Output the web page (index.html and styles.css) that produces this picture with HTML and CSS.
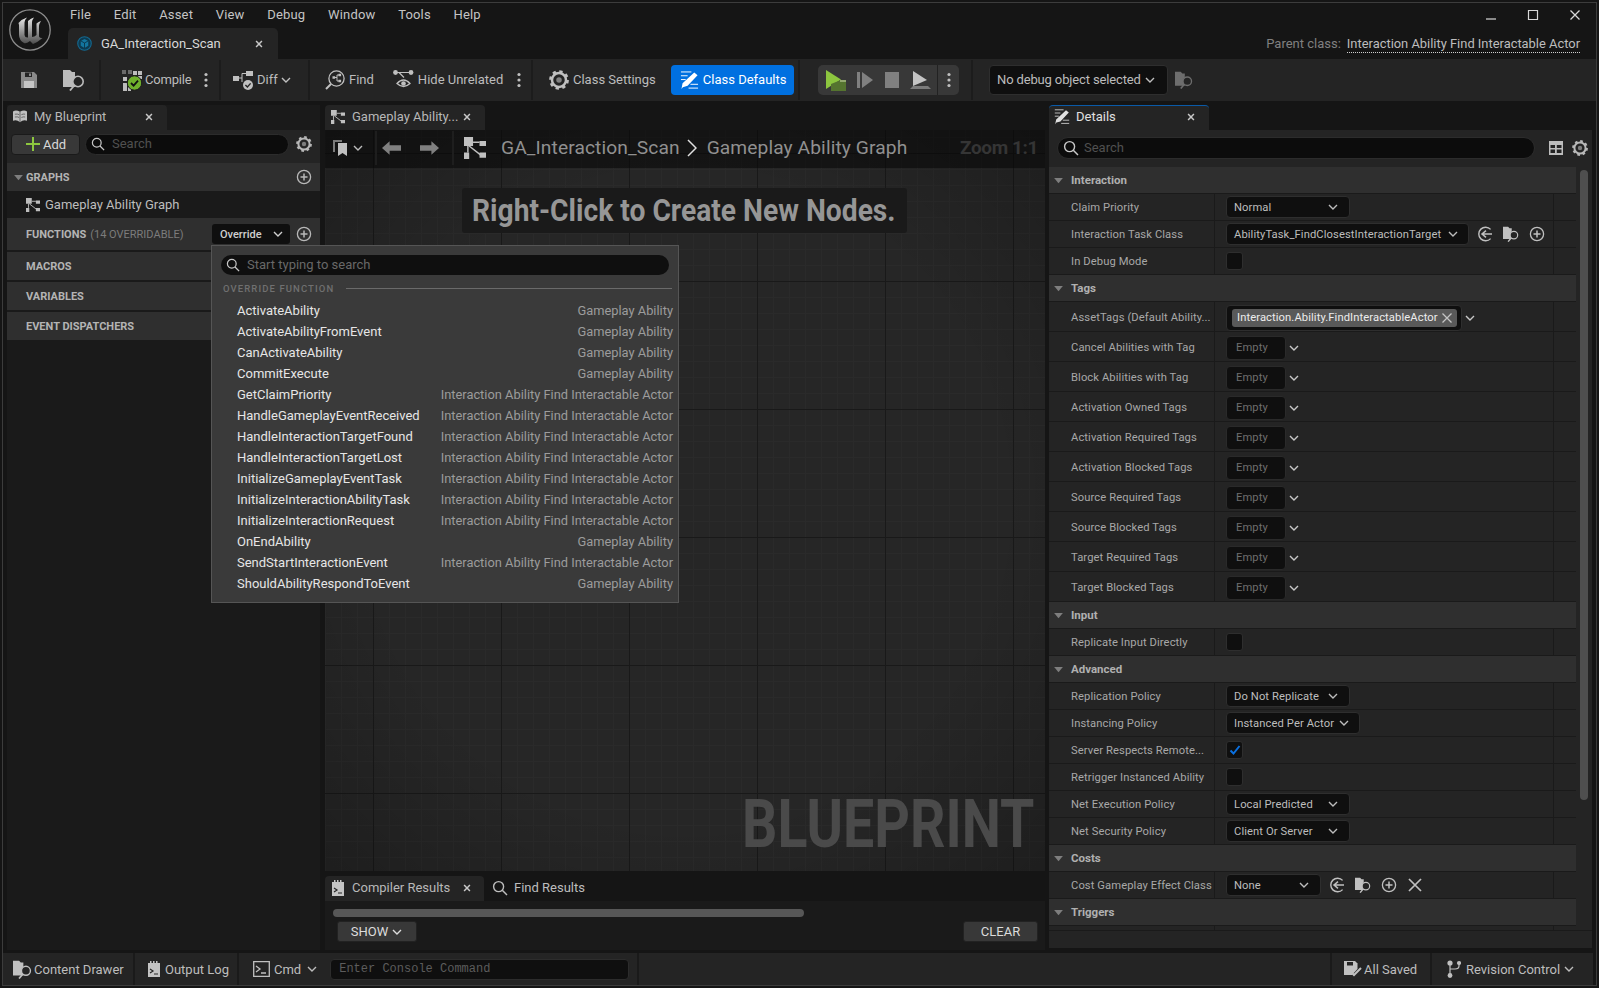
FILE: index.html
```html
<!DOCTYPE html>
<html lang="en">
<head>
<meta charset="utf-8">
<title>GA_Interaction_Scan</title>
<link rel="stylesheet" href="styles.css">
</head>
<body>
<svg class="sprite" xmlns="http://www.w3.org/2000/svg">
  <defs>
    <linearGradient id="ue-grad" x1="0" y1="0" x2="0" y2="1"><stop offset="0" stop-color="#e8e8e8"/><stop offset=".5" stop-color="#9a9a9a"/><stop offset="1" stop-color="#4c4c4c"/></linearGradient>
    <symbol id="i-x" viewBox="0 0 12 12"><path d="M2.5 2.5l7 7M9.5 2.5l-7 7" fill="none" stroke="currentColor" stroke-width="1.8"/></symbol>
    <symbol id="i-xthin" viewBox="0 0 12 12"><path d="M1.500 1.500l9 9M10.500 1.500l-9 9" fill="none" stroke="currentColor" stroke-width="1.300"/></symbol>
    <symbol id="i-chev" viewBox="0 0 12 12"><path d="M2 4l4 4 4-4" fill="none" stroke="currentColor" stroke-width="1.4"/></symbol>
    <symbol id="i-tri" viewBox="0 0 12 8"><path d="M1 1h10L6 7z" fill="currentColor"/></symbol>
    <symbol id="i-search" viewBox="0 0 16 16"><circle cx="6.6" cy="6.6" r="5" fill="none" stroke="currentColor" stroke-width="1.4"/><path d="M10.3 10.3L15 15" stroke="currentColor" stroke-width="1.5"/></symbol>
    <symbol id="i-plus-c" viewBox="0 0 16 16"><circle cx="8" cy="8" r="6.6" fill="none" stroke="currentColor" stroke-width="1.3"/><path d="M8 4.5v7M4.5 8h7" stroke="currentColor" stroke-width="1.5"/></symbol>
    <symbol id="i-back" viewBox="0 0 16 16"><path d="M13.6 3.4A6.8 6.8 0 1 0 13.6 12.6" fill="none" stroke="currentColor" stroke-width="1.4"/><path d="M15 8H6M9 4.6L5 8l4 3.4" fill="none" stroke="currentColor" stroke-width="1.5"/></symbol>
    <symbol id="i-gear" viewBox="0 0 16 16"><circle cx="8" cy="8" r="5.6" fill="none" stroke="currentColor" stroke-width="2"/><circle cx="8" cy="8" r="6.8" fill="none" stroke="currentColor" stroke-width="2.2" stroke-dasharray="2.6 2.74"/><circle cx="8" cy="8" r="2.2" fill="currentColor" opacity=".6"/></symbol>
    <symbol id="i-save" viewBox="0 0 18 18"><path d="M1 1h13l3 3v13H1z" fill="currentColor"/><path d="M5 1.5h7v4.5H5z" fill="#242424"/><path d="M9 2.5h2v2.5H9z" fill="currentColor"/><path d="M4 10h10v7H4z" fill="#c6c6c6"/></symbol>
    <symbol id="i-browse" viewBox="0 0 22 22"><path d="M0 1h7l2 2h3v15H0z" fill="currentColor"/><circle cx="15" cy="12.500" r="5.200" fill="#242424" stroke="currentColor" stroke-width="1.600"/><path d="M11.200 16.500L7 21.500" stroke="currentColor" stroke-width="1.900"/></symbol>
    <symbol id="i-compile" viewBox="0 0 21 21"><g fill="#6a6a6a"><path d="M0 0h4v4H0zM6 0h4v4H6z"/></g><g fill="#bdbdbd"><path d="M16 1h4v4h-4zM1 7h4v4H1zM11 1h4v4h-4zM1 13h4v4H1zM1 17h4v4H1zM6 17h3v4H6zM16 6h4v3h-4z"/></g><circle cx="12.5" cy="13" r="7.2" fill="#6fb02c" stroke="#1c1c1c"/><path d="M9 13l2.6 2.6L16 10.6" fill="none" stroke="#111" stroke-width="1.8"/></symbol>
    <symbol id="i-kebab" viewBox="0 0 4 16"><circle cx="2" cy="2.5" r="1.6" fill="currentColor"/><circle cx="2" cy="8" r="1.6" fill="currentColor"/><circle cx="2" cy="13.5" r="1.6" fill="currentColor"/></symbol>
    <symbol id="i-diff" viewBox="0 0 20 20"><path d="M0 6h6v5H0zM13 1h7v5h-7z" fill="currentColor"/><path d="M6 8h3V3.5h4M9 8v4" fill="none" stroke="currentColor" stroke-width="1"/><circle cx="15" cy="15" r="5" fill="currentColor"/><path d="M12.4 15l2 2 3.2-3.6" fill="none" stroke="#242424" stroke-width="1.4"/></symbol>
    <symbol id="i-find" viewBox="0 0 20 20"><circle cx="11.5" cy="8.5" r="7.6" fill="none" stroke="currentColor" stroke-width="1.3"/><path d="M6 14L1 19" stroke="currentColor" stroke-width="2"/><path d="M9 7.5h3V5h3M12 7.5V11h3" fill="none" stroke="currentColor"/><path d="M7.5 6.2h2.6v2.6H7.5zM13.5 3.8h2.6v2.4h-2.6zM13.5 9.8h2.6v2.4h-2.6z" fill="currentColor"/></symbol>
    <symbol id="i-hide" viewBox="0 0 21 20"><circle cx="2.5" cy="2.5" r="2.4" fill="currentColor"/><circle cx="18" cy="2.5" r="2.4" fill="currentColor"/><path d="M3 2.5h14M6 2.5l5 5" fill="none" stroke="currentColor" stroke-width="1.2"/><path d="M4 13.5q6.500-7 13 0q-6.500 6-13 0z" fill="none" stroke="currentColor" stroke-width="1.3"/><circle cx="10.500" cy="13.500" r="2.300" fill="currentColor"/></symbol>
    <symbol id="i-pencil" viewBox="0 0 20 20"><path d="M1 1h11M1 5h7M1 9h5M9 18h10M11 14h8" stroke="currentColor" stroke-width="1" fill="none"/><path d="M15 1.500l3.500 3L8 15.500l-5 1.500-1.500 2 1.200-6z" fill="currentColor"/></symbol>
    <symbol id="i-play" viewBox="0 0 20 21"><path d="M0 0l15 9.500L0 19z" fill="#8dc63f"/><path d="M5 14l10-4h5v11H5z" fill="#55742f"/><path d="M14 10h6v2h-6z" fill="#93a86f"/></symbol>
    <symbol id="i-skip" viewBox="0 0 16 16"><path d="M0 0h3v16H0zM5 0l11 8-11 8z" fill="currentColor"/></symbol>
    <symbol id="i-stop" viewBox="0 0 14 16"><path d="M0 0h14v16H0z" fill="currentColor"/></symbol>
    <symbol id="i-eject" viewBox="0 0 21 18"><path d="M3 0l14 9L3 15z" fill="#c4c4c4"/><path d="M0 18l3-3h15l3 3z" fill="#7b7b7b"/></symbol>
    <symbol id="i-book" viewBox="0 0 15 15"><path d="M0 1.500q3.500-2 7.500 .5q4-2.500 7.500-.5v10q-4-1.500-7.500 1.500q-3.500-3-7.500-1.500z" fill="currentColor"/><path d="M7.500 2v11M2 4.500q3-.5 4.500 .5M2 7.500q3-.5 4.500 .5M9 5q2-1 4-.5M9 8q2-1 4-.5" stroke="#242424" stroke-width=".6" fill="none"/></symbol>
    <symbol id="i-graph" viewBox="0 0 17 17"><path d="M0 0h7v7H0zM12 3h5v4h-5zM0 12h4v5H0zM12 12h5v4h-5z" fill="currentColor"/><path d="M7 4h5M4 7l9 7M3 7v5" stroke="currentColor" stroke-width="1.100" fill="none"/></symbol>
    <symbol id="i-bookmark" viewBox="0 0 16 18"><path d="M0 1h9v2H2v10H0z" fill="#7a7a7a"/><path d="M5 4h9v13l-4.500-3L5 17z" fill="#c0c0c0"/></symbol>
    <symbol id="i-left" viewBox="0 0 20 14"><path d="M0 7l8-7v4h12v6H8v4z" fill="currentColor"/></symbol>
    <symbol id="i-right" viewBox="0 0 20 14"><path d="M20 7l-8-7v4H0v6h12v4z" fill="currentColor"/></symbol>
    <symbol id="i-bc" viewBox="0 0 10 18"><path d="M1 1l8 8-8 8" fill="none" stroke="currentColor" stroke-width="1.500"/></symbol>
    <symbol id="i-log" viewBox="0 0 12 16"><path d="M0 2h2V0h1.500v2h1.500V0h1.500v2H8V0h1.500v2H12v14H0z" fill="currentColor"/><path d="M2 8l3 2-3 2M6 13h4" fill="none" stroke="#242424" stroke-width="1.200"/></symbol>
    <symbol id="i-cmd" viewBox="0 0 17 16"><path d="M.7.700h15.600v14.600H.7z" fill="none" stroke="currentColor" stroke-width="1.300"/><path d="M3 5l4 3-4 3M8 12h5" fill="none" stroke="currentColor" stroke-width="1.300"/></symbol>
    <symbol id="i-saved" viewBox="0 0 18 16"><path d="M0 0h11l2.500 2.500V8L8 14H0z" fill="currentColor"/><path d="M3 1h6v3.500H3z" fill="#242424"/><path d="M7 11l3 3 7-7" fill="none" stroke="currentColor" stroke-width="2"/></symbol>
    <symbol id="i-rc" viewBox="0 0 14 18"><circle cx="3" cy="3" r="2.600" fill="currentColor"/><circle cx="12" cy="3" r="2.100" fill="currentColor"/><circle cx="3" cy="15.500" r="2.400" fill="currentColor"/><path d="M3 3v12M12 4v2q0 3-4 3H3" fill="none" stroke="currentColor" stroke-width="1.200"/></symbol>
    <symbol id="i-table" viewBox="0 0 14 14"><path d="M0 0h14v14H0z" fill="currentColor"/><path d="M1.500 4h4.500v3H1.500zM7.800 4h4.700v3H7.800zM1.500 8.500h4.500v3.500H1.500zM7.800 8.500h4.700v3.500H7.800z" fill="#242424"/></symbol>
    <symbol id="i-addplus" viewBox="0 0 14 14"><path d="M6 0h2v6h6v2H8v6H6V8H0V6h6z" fill="currentColor"/></symbol>
    <symbol id="i-check" viewBox="0 0 12 12"><path d="M1.500 6.500l3 3 6-7.500" fill="none" stroke="currentColor" stroke-width="2"/></symbol>
    <symbol id="i-ue" viewBox="0 0 42 42"><circle cx="21" cy="21" r="20.200" fill="#161616" stroke="#8d8d8d" stroke-width="1.300"/><path d="M9.500 14Q13 10 18 8.500 15.500 11 15.500 13.500V26Q16 29 19 28.500V12Q22 9 25 8.500 23 11 23 13V28Q25.500 28 27.500 26V14.500Q29.500 12.500 32 12 30 15 30 17V27.500Q31 29.500 33.500 29 29 33 24 35L21 32Q17 35 15 34 10 31 10 26V16z" fill="url(#ue-grad)"/></symbol>
    <symbol id="i-bp" viewBox="0 0 20 20"><circle cx="10" cy="10" r="9" fill="#0d3a50" stroke="#14688f" stroke-width="1.500"/><path d="M10 4l5 2.500v6.500l-5 3-5-3V6.500z" fill="#13759f"/><path d="M5 6.500l5 2.800 5-2.800M10 9.300V16" stroke="#0a2a3a" fill="none"/></symbol>
    <symbol id="i-min" viewBox="0 0 12 12"><path d="M1 10h10" stroke="currentColor" stroke-width="1.200"/></symbol>
    <symbol id="i-max" viewBox="0 0 12 12"><path d="M1.500 1.500h9v9h-9z" fill="none" stroke="currentColor" stroke-width="1.200"/></symbol>
  </defs>
</svg>

<div class="app">
  <div class="frame">
    <header class="titlebar">
      <div class="logo-col"><svg class="logo"><use href="#i-ue"/></svg></div>
      <div class="title-mid">
        <nav class="menu"><span>File</span><span>Edit</span><span>Asset</span><span>View</span><span>Debug</span><span>Window</span><span>Tools</span><span>Help</span></nav>
        <div class="doc-tab">
          <svg class="ic14 doc-ic"><use href="#i-bp"/></svg>
          <span class="doc-name">GA_Interaction_Scan</span>
          <svg class="ic10 x-light"><use href="#i-x"/></svg>
        </div>
      </div>
      <div class="title-right">
        <div class="win-ctrls">
          <svg class="ic12"><use href="#i-min"/></svg>
          <svg class="ic12"><use href="#i-max"/></svg>
          <svg class="ic12"><use href="#i-xthin"/></svg>
        </div>
        <div class="parent"><span class="parent-lbl">Parent class:</span><span class="parent-link">Interaction Ability Find Interactable Actor</span></div>
      </div>
    </header>

    <div class="toolbar">
      <div class="tg tg1">
        <svg class="ic-save"><use href="#i-save"/></svg>
        <svg class="ic-browse"><use href="#i-browse"/></svg>
      </div>
      <div class="tg tg2">
        <svg class="ic-compile"><use href="#i-compile"/></svg>
        <span class="tb-t tb-compile">Compile</span>
        <svg class="kebab kb-compile"><use href="#i-kebab"/></svg>
      </div>
      <div class="tg tg3">
        <svg class="ic-diff"><use href="#i-diff"/></svg>
        <span class="tb-t">Diff</span>
        <svg class="ic12 chev-tb"><use href="#i-chev"/></svg>
      </div>
      <div class="tg tg4">
        <svg class="ic-find"><use href="#i-find"/></svg>
        <span class="tb-t">Find</span>
        <svg class="ic-hide"><use href="#i-hide"/></svg>
        <span class="tb-t">Hide Unrelated</span>
        <svg class="kebab kb-hide"><use href="#i-kebab"/></svg>
      </div>
      <div class="tg tg5">
        <svg class="ic-find ic-cs"><use href="#i-gear"/></svg>
        <span class="tb-t">Class Settings</span>
        <div class="btn-blue"><svg class="ic-pencil"><use href="#i-pencil"/></svg><span class="tb-t-on">Class Defaults</span></div>
      </div>
      <div class="tg tg6">
        <div class="play-group">
          <svg class="ic-play"><use href="#i-play"/></svg>
          <svg class="ic-skip"><use href="#i-skip"/></svg>
          <svg class="ic-stop"><use href="#i-stop"/></svg>
          <svg class="ic-eject"><use href="#i-eject"/></svg>
          <div class="play-more"><svg class="kebab"><use href="#i-kebab"/></svg></div>
        </div>
      </div>
      <div class="tg7">
        <div class="debug-combo"><span class="tb-t tb-debug">No debug object selected</span><svg class="ic12"><use href="#i-chev"/></svg></div>
        <svg class="ic-browse ic-browse-dim"><use href="#i-browse"/></svg>
      </div>
    </div>

    <main class="workspace">
      <section class="left">
        <div class="strip">
          <div class="tab tab-bp"><svg class="ic14 tab-ic"><use href="#i-book"/></svg><span class="tab-t">My Blueprint</span><svg class="ic10 tab-x"><use href="#i-x"/></svg></div>
        </div>
        <div class="left-tools">
          <div class="btn-add"><svg class="ic14 green"><use href="#i-addplus"/></svg><span>Add</span></div>
          <div class="search search-left"><svg class="ic14"><use href="#i-search"/></svg><span>Search</span></div>
          <svg class="ic16 gear-left"><use href="#i-gear"/></svg>
        </div>
        <div class="sec sec-graphs"><svg class="ic-tri"><use href="#i-tri"/></svg><b>GRAPHS</b><svg class="ic16 sec-plus"><use href="#i-plus-c"/></svg></div>
        <div class="graph-row"><svg class="ic14"><use href="#i-graph"/></svg><span>Gameplay Ability Graph</span></div>
        <div class="sec sec-fn"><b>FUNCTIONS</b><span class="sec-sub">(14 OVERRIDABLE)</span><div class="override"><span>Override</span><svg class="ic12"><use href="#i-chev"/></svg></div><svg class="ic16 sec-plus-fn"><use href="#i-plus-c"/></svg></div>
        <div class="sec"><b>MACROS</b></div>
        <div class="sec"><b>VARIABLES</b></div>
        <div class="sec"><b>EVENT DISPATCHERS</b></div>
      </section>

      <section class="center">
        <div class="strip">
          <div class="tab tab-graph"><svg class="ic14 tab-ic"><use href="#i-graph"/></svg><span class="tab-t">Gameplay Ability...</span><svg class="ic10 tab-x"><use href="#i-x"/></svg></div>
        </div>
        <div class="surface">
          <div class="graph-bar">
            <div class="gb gb1"><svg class="ic-bm"><use href="#i-bookmark"/></svg><svg class="ic12"><use href="#i-chev"/></svg></div>
            <div class="gb gb2"><svg class="ic-arrow"><use href="#i-left"/></svg><svg class="ic-arrow"><use href="#i-right"/></svg></div>
            <div class="gb gb3">
              <svg class="ic-gicon"><use href="#i-graph"/></svg>
              <span class="crumb crumb-a">GA_Interaction_Scan</span>
              <svg class="ic-bc"><use href="#i-bc"/></svg>
              <span class="crumb">Gameplay Ability Graph</span>
            </div>
            <span class="zoom">Zoom 1:1</span>
          </div>
          <div class="hint"><span>Right-Click to Create New Nodes.</span></div>
          <div class="watermark"><span>BLUEPRINT</span></div>
        </div>
        <div class="bottom-strip">
          <div class="tab tab-comp"><svg class="ic-log"><use href="#i-log"/></svg><span class="tab-t">Compiler Results</span><svg class="ic10 tab-x"><use href="#i-x"/></svg></div>
          <div class="tab-flat"><svg class="ic16"><use href="#i-search"/></svg><span>Find Results</span></div>
        </div>
        <div class="bottom-body">
          <div class="hscroll"></div>
          <div class="bottom-btns">
            <div class="btn-dark btn-show"><span>SHOW</span><svg class="ic12"><use href="#i-chev"/></svg></div>
            <div class="btn-dark btn-clear"><span>CLEAR</span></div>
          </div>
        </div>
      </section>

      <section class="right">
        <div class="strip">
          <div class="tab tab-details"><svg class="ic-tabpencil"><use href="#i-pencil"/></svg><span class="tab-t tab-t-on">Details</span><svg class="ic10 tab-x"><use href="#i-x"/></svg></div>
        </div>
        <div class="det-tools">
          <div class="search search-det"><svg class="ic16"><use href="#i-search"/></svg><span>Search</span></div>
          <svg class="ic14 det-table"><use href="#i-table"/></svg>
          <svg class="ic16 det-gear"><use href="#i-gear"/></svg>
        </div>
        <div class="det-body">
          <div class="det-list">
            <div class="hdr"><svg class="ic-tri2"><use href="#i-tri"/></svg><span>Interaction</span></div>
            <div class="row"><div class="lbl">Claim Priority</div><div class="val"><div class="combo w124"><span>Normal</span><svg class="ic12"><use href="#i-chev"/></svg></div></div><div class="rest"></div></div>
            <div class="row"><div class="lbl">Interaction Task Class</div><div class="val"><div class="combo w243"><span>AbilityTask_FindClosestInteractionTarget</span><svg class="ic12"><use href="#i-chev"/></svg></div><div class="acts"><svg class="ic16"><use href="#i-back"/></svg><svg class="ic16"><use href="#i-browse"/></svg><svg class="ic16"><use href="#i-plus-c"/></svg></div></div><div class="rest"></div></div>
            <div class="row"><div class="lbl">In Debug Mode</div><div class="val"><div class="cb"></div></div><div class="rest"></div></div>
            <div class="hdr"><svg class="ic-tri2"><use href="#i-tri"/></svg><span>Tags</span></div>
            <div class="row row-tag"><div class="lbl">AssetTags (Default Ability...</div><div class="val"><div class="tagbox"><div class="chip"><span>Interaction.Ability.FindInteractableActor</span><svg class="ic12"><use href="#i-xthin"/></svg></div></div><svg class="ic12 tag-chev"><use href="#i-chev"/></svg></div><div class="rest"></div></div>
            <div class="row row-tag"><div class="lbl">Cancel Abilities with Tag</div><div class="val"><div class="empty">Empty</div><svg class="ic12 tag-chev"><use href="#i-chev"/></svg></div><div class="rest"></div></div>
            <div class="row row-tag"><div class="lbl">Block Abilities with Tag</div><div class="val"><div class="empty">Empty</div><svg class="ic12 tag-chev"><use href="#i-chev"/></svg></div><div class="rest"></div></div>
            <div class="row row-tag"><div class="lbl">Activation Owned Tags</div><div class="val"><div class="empty">Empty</div><svg class="ic12 tag-chev"><use href="#i-chev"/></svg></div><div class="rest"></div></div>
            <div class="row row-tag"><div class="lbl">Activation Required Tags</div><div class="val"><div class="empty">Empty</div><svg class="ic12 tag-chev"><use href="#i-chev"/></svg></div><div class="rest"></div></div>
            <div class="row row-tag"><div class="lbl">Activation Blocked Tags</div><div class="val"><div class="empty">Empty</div><svg class="ic12 tag-chev"><use href="#i-chev"/></svg></div><div class="rest"></div></div>
            <div class="row row-tag"><div class="lbl">Source Required Tags</div><div class="val"><div class="empty">Empty</div><svg class="ic12 tag-chev"><use href="#i-chev"/></svg></div><div class="rest"></div></div>
            <div class="row row-tag"><div class="lbl">Source Blocked Tags</div><div class="val"><div class="empty">Empty</div><svg class="ic12 tag-chev"><use href="#i-chev"/></svg></div><div class="rest"></div></div>
            <div class="row row-tag"><div class="lbl">Target Required Tags</div><div class="val"><div class="empty">Empty</div><svg class="ic12 tag-chev"><use href="#i-chev"/></svg></div><div class="rest"></div></div>
            <div class="row row-tag"><div class="lbl">Target Blocked Tags</div><div class="val"><div class="empty">Empty</div><svg class="ic12 tag-chev"><use href="#i-chev"/></svg></div><div class="rest"></div></div>
            <div class="hdr"><svg class="ic-tri2"><use href="#i-tri"/></svg><span>Input</span></div>
            <div class="row"><div class="lbl">Replicate Input Directly</div><div class="val"><div class="cb"></div></div><div class="rest"></div></div>
            <div class="hdr"><svg class="ic-tri2"><use href="#i-tri"/></svg><span>Advanced</span></div>
            <div class="row"><div class="lbl">Replication Policy</div><div class="val"><div class="combo w124"><span>Do Not Replicate</span><svg class="ic12"><use href="#i-chev"/></svg></div></div><div class="rest"></div></div>
            <div class="row"><div class="lbl">Instancing Policy</div><div class="val"><div class="combo w134"><span>Instanced Per Actor</span><svg class="ic12"><use href="#i-chev"/></svg></div></div><div class="rest"></div></div>
            <div class="row"><div class="lbl">Server Respects Remote...</div><div class="val"><div class="cb"><svg class="ic12 check"><use href="#i-check"/></svg></div></div><div class="rest"></div></div>
            <div class="row"><div class="lbl">Retrigger Instanced Ability</div><div class="val"><div class="cb"></div></div><div class="rest"></div></div>
            <div class="row"><div class="lbl">Net Execution Policy</div><div class="val"><div class="combo w124"><span>Local Predicted</span><svg class="ic12"><use href="#i-chev"/></svg></div></div><div class="rest"></div></div>
            <div class="row"><div class="lbl">Net Security Policy</div><div class="val"><div class="combo w124"><span>Client Or Server</span><svg class="ic12"><use href="#i-chev"/></svg></div></div><div class="rest"></div></div>
            <div class="hdr"><svg class="ic-tri2"><use href="#i-tri"/></svg><span>Costs</span></div>
            <div class="row"><div class="lbl">Cost Gameplay Effect Class</div><div class="val"><div class="combo w95"><span>None</span><svg class="ic12"><use href="#i-chev"/></svg></div><div class="acts"><svg class="ic16"><use href="#i-back"/></svg><svg class="ic16"><use href="#i-browse"/></svg><svg class="ic16"><use href="#i-plus-c"/></svg><svg class="ic16"><use href="#i-xthin"/></svg></div></div><div class="rest"></div></div>
            <div class="hdr"><svg class="ic-tri2"><use href="#i-tri"/></svg><span>Triggers</span></div>
            <div class="row"><div class="lbl"></div><div class="val"></div><div class="rest"></div></div>
          </div>
          <div class="det-gutter"><div class="det-thumb"></div></div>
        </div>
        <div class="det-foot"></div>
      </section>
    </main>

    <footer class="status">
      <div class="st st1"><svg class="ic-browse ic-st"><use href="#i-browse"/></svg><span>Content Drawer</span></div>
      <div class="st st2"><svg class="ic-log"><use href="#i-log"/></svg><span>Output Log</span></div>
      <div class="st st3"><svg class="ic-cmd"><use href="#i-cmd"/></svg><span>Cmd</span><svg class="ic12"><use href="#i-chev"/></svg><div class="console">Enter Console Command</div></div>
      <div class="st st-fill"></div>
      <div class="st st4"><svg class="ic-saved"><use href="#i-saved"/></svg><span>All Saved</span></div>
      <div class="st st5"><svg class="ic-rc"><use href="#i-rc"/></svg><span>Revision Control</span><svg class="ic12"><use href="#i-chev"/></svg></div>
    </footer>
  </div>

  <div class="popup">
    <div class="pop-search"><svg class="ic14"><use href="#i-search"/></svg><span>Start typing to search</span></div>
    <div class="pop-head"><span>OVERRIDE FUNCTION</span><i></i></div>
    <ul class="pop-list">
      <li><span>ActivateAbility</span><em>Gameplay Ability</em></li>
      <li><span>ActivateAbilityFromEvent</span><em>Gameplay Ability</em></li>
      <li><span>CanActivateAbility</span><em>Gameplay Ability</em></li>
      <li><span>CommitExecute</span><em>Gameplay Ability</em></li>
      <li><span>GetClaimPriority</span><em>Interaction Ability Find Interactable Actor</em></li>
      <li><span>HandleGameplayEventReceived</span><em>Interaction Ability Find Interactable Actor</em></li>
      <li><span>HandleInteractionTargetFound</span><em>Interaction Ability Find Interactable Actor</em></li>
      <li><span>HandleInteractionTargetLost</span><em>Interaction Ability Find Interactable Actor</em></li>
      <li><span>InitializeGameplayEventTask</span><em>Interaction Ability Find Interactable Actor</em></li>
      <li><span>InitializeInteractionAbilityTask</span><em>Interaction Ability Find Interactable Actor</em></li>
      <li><span>InitializeInteractionRequest</span><em>Interaction Ability Find Interactable Actor</em></li>
      <li><span>OnEndAbility</span><em>Gameplay Ability</em></li>
      <li><span>SendStartInteractionEvent</span><em>Interaction Ability Find Interactable Actor</em></li>
      <li><span>ShouldAbilityRespondToEvent</span><em>Gameplay Ability</em></li>
    </ul>
  </div>
</div>
</body>
</html>
```

FILE: styles.css
```css
* { box-sizing: border-box; }
html, body { margin: 0; padding: 0; background: #151515; }
body { font-family: Roboto, "Liberation Sans", sans-serif; font-size: 13px; color: #c0c0c0; overflow: hidden; white-space: nowrap; }
svg { display: block; flex: none; }
.sprite { width: 0; height: 0; position: absolute; }
.app { position: relative; width: 1599px; height: 988px; overflow: hidden; background: #151515; }
.frame { margin: 2px; height: 984px; border: 1px solid #3c3c3c; display: flex; flex-direction: column; background: #151515; }

/* common icons */
.ic10 { width: 10px; height: 10px; }
.ic12 { width: 12px; height: 12px; }
.ic14 { width: 14px; height: 14px; }
.ic16 { width: 16px; height: 16px; }
.kebab { width: 4px; height: 16px; color: #c0c0c0; }
.green { color: #8dc63f; }

/* title bar */
.titlebar { display: flex; height: 56px; flex: none; }
.logo-col { width: 65px; padding: 6px 0 0 6px; }
.logo { width: 42px; height: 42px; }
.title-mid { width: 500px; display: flex; flex-direction: column; }
.menu { height: 25px; display: flex; align-items: center; gap: 22.8px; padding: 0 0 2px 2px; color: #c4c4c4; letter-spacing: .15px; }
.doc-tab { width: 210px; height: 31px; background: #242424; border-radius: 5px 5px 0 0; display: flex; align-items: center; padding: 0 14px 0 9px; color: #d8d8d8; }
.doc-ic { width: 15px; height: 15px; }
.doc-name { margin-left: 9px; flex: 1; }
.x-light { color: #c8c8c8; }
.title-right { flex: 1; display: flex; flex-direction: column; align-items: flex-end; padding-right: 16px; }
.win-ctrls { display: flex; gap: 30px; height: 25px; align-items: center; color: #d8d8d8; margin-top: -1px; margin-right: -1px; }
.parent { display: flex; gap: 6px; margin-top: 9px; font-size: 13px; }
.parent-lbl { color: #808080; }
.parent-link { color: #bdbdbd; border-bottom: 1px dotted #cfcfcf; line-height: 16px; font-size: 12.9px; }

/* toolbar */
.toolbar { height: 42px; flex: none; background: #242424; display: flex; align-items: stretch; }
.tg { display: flex; align-items: center; border-right: 2px solid #1c1c1c; margin: 1px 0; flex: none; }
.tg1 { width: 98px; padding-left: 17px; }
.tg2 { width: 120px; padding-left: 21px; }
.tg3 { width: 89px; padding-left: 12px; }
.tg4 { width: 223px; padding-left: 15px; }
.tg5 { width: 267px; padding-left: 16px; }
.tg6 { width: 173px; padding-left: 18px; }
.tg7 { display: flex; align-items: center; padding-left: 16px; }
.tb-t { color: #bcbcbc; margin-top: -2px; }
.tb-t-on { margin-top: -2px; }
.tb-compile { letter-spacing: -.2px; }
.tb-debug { letter-spacing: -.14px; }
.ic-save { width: 18px; height: 18px; color: #8a8a8a; }
.ic-browse { width: 22px; height: 22px; color: #bbb; margin-left: 25px; }
.ic-compile { width: 21px; height: 21px; margin-right: 2px; }
.kb-compile { margin-left: 13px; }
.ic-diff { width: 20px; height: 20px; color: #c0c0c0; margin-right: 4px; }
.chev-tb { margin-left: 2px; }
.ic-find { width: 20px; height: 20px; color: #c0c0c0; margin-right: 4px; }
.ic-hide { width: 21px; height: 20px; color: #c0c0c0; margin: 0 4px 0 19px; }
.kb-hide { margin-left: 14px; }
.ic-cs { margin-right: 4px; }
.btn-blue { margin-left: 15px; width: 123px; height: 30px; background: #0070e0; border-radius: 4px; display: flex; align-items: center; padding-left: 9px; color: #fff; }
.ic-pencil { width: 19px; height: 19px; margin-right: 4px; color: #fff; }
.play-group { width: 141px; height: 30px; background: #383838; border-radius: 5px; display: flex; align-items: center; padding-left: 8px; color: #808080; }
.ic-play { width: 20px; height: 21px; }
.ic-skip { width: 16px; height: 16px; margin-left: 11px; }
.ic-stop { width: 14px; height: 16px; margin-left: 12px; }
.ic-eject { width: 21px; height: 18px; margin-left: 11px; }
.play-more { margin-left: 6px; width: 22px; height: 30px; border-left: 1px solid #222; display: flex; align-items: center; justify-content: center; }
.debug-combo { width: 179px; height: 30px; background: #0f0f0f; border: 1px solid #2e2e2e; border-radius: 4px; display: flex; align-items: center; justify-content: space-between; padding: 0 11px 0 7px; color: #c0c0c0; }
.ic-browse-dim { width: 18px; height: 18px; margin-left: 7px; color: #6d6d6d; }

/* workspace */
.workspace { flex: 1; display: flex; padding: 4px 0 0 4px; min-height: 0; }
.strip { height: 25px; display: flex; flex: none; }
.tab { height: 25px; background: #242424; border-radius: 4px 4px 0 0; display: flex; align-items: center; padding-bottom: 2px; }
.tab-ic { color: #c0c0c0; }
.tab-t { color: #b8b8b8; }
.tab-t-on { color: #e0e0e0; }
.tab-x { color: #c8c8c8; }

/* left */
.left { width: 313px; flex: none; background: #1a1a1a; display: flex; flex-direction: column; }
.tab-bp { width: 160px; padding-left: 6px; }
.tab-bp .tab-t { margin-left: 7px; flex: 1; }
.tab-bp .tab-x { margin-right: 13px; }
.left-tools { height: 33px; flex: none; background: #242424; display: flex; align-items: center; padding-left: 4px; padding-bottom: 5px; }
.btn-add { width: 69px; height: 21px; background: #383838; border: 1px solid #1a1a1a; border-radius: 4px; display: flex; align-items: center; padding-left: 14px; gap: 3px; color: #d8d8d8; }
.search { background: #0c0c0c; border: 1px solid #2c2c2c; border-radius: 11px; display: flex; align-items: center; color: #505050; }
.search-left { margin-left: 5px; width: 204px; height: 21px; padding-left: 5px; gap: 7px; }
.search-left span { margin-top: -2px; }
.search-left svg { color: #c8c8c8; }
.gear-left { margin-left: 7px; color: #b8b8b8; }
.sec { height: 28px; margin-bottom: 2px; background: #2f2f2f; display: flex; align-items: center; padding-left: 19px; font-size: 11px; flex: none; position: relative; }
.sec b { font-weight: 700; color: #b4b4b4; }
.sec-graphs { margin-bottom: 0; padding-left: 6px; }
.ic-tri { width: 11px; height: 7px; color: #7e7e7e; margin-right: 2px; }
.sec-plus { margin-left: auto; margin-right: 8px; color: #b8b8b8; }
.graph-row { height: 27px; flex: none; display: flex; align-items: center; padding-left: 19px; gap: 5px; color: #bdbdbd; }
.sec-fn { height: 32px; }
.sec-sub { margin-left: 4px; color: #7c7c7c; }
.override { margin-left: auto; width: 78px; height: 20px; background: #0f0f0f; border-radius: 3px; display: flex; align-items: center; justify-content: space-between; padding: 0 6px 0 8px; color: #cfcfcf; font-weight: 500; }
.sec-plus-fn { margin: 0 8px 0 6px; color: #b8b8b8; }

/* center */
.center { width: 720px; margin-left: 5px; flex: none; display: flex; flex-direction: column; }
.tab-graph { width: 160px; padding-left: 6px; }
.tab-graph .tab-t { margin-left: 7px; flex: 1; }
.tab-graph .tab-x { margin-right: 13px; }
.surface {
  flex: 1; min-height: 0; position: relative;
  background-color: #262626;
  background-image:
    radial-gradient(ellipse at center, transparent 62%, rgba(0,0,0,.22) 100%),
    linear-gradient(to right, #191919 1px, transparent 1px),
    linear-gradient(to bottom, #191919 1px, transparent 1px),
    linear-gradient(to right, #2a2a2a 1px, transparent 1px),
    linear-gradient(to bottom, #2a2a2a 1px, transparent 1px);
  background-size: 100% 100%, 128px 128px, 128px 128px, 16px 16px, 16px 16px;
  background-position: 0 0, 48px 23px, 48px 23px, 0 7px, 0 7px;
}
.graph-bar { height: 38px; background: rgba(8,8,8,.55); display: flex; align-items: center; position: relative; padding-bottom: 3px; }
.gb { display: flex; align-items: center; height: 34px; }
.gb1 { width: 52px; padding-left: 8px; gap: 3px; color: #bdbdbd; border-right: 2px solid #1e1e1e; }
.ic-bm { width: 16px; height: 18px; }
.gb2 { width: 77px; padding-left: 5px; gap: 19px; color: #808080; border-right: 2px solid #1e1e1e; }
.ic-arrow { width: 19px; height: 14px; }
.gb3 { padding-left: 10px; }
.ic-gicon { width: 22px; height: 22px; color: #c0c0c0; margin-right: 15px; }
.crumb { font-size: 19.2px; color: #909090; letter-spacing: .1px; }
.ic-bc { width: 10px; height: 18px; color: #e0e0e0; margin: 0 10px 0 7px; }
.zoom { margin-left: auto; margin-right: 7px; font-size: 19px; font-weight: 700; color: #353535; letter-spacing: -.4px; }
.hint { position: absolute; left: 137px; top: 58px; width: 445px; height: 45px; background: #1a1a1a; border-radius: 3px; overflow: hidden; }
.hint span { display: block; width: 600px; font-size: 31px; line-height: 45px; font-weight: 700; color: #969696; padding-left: 11px; transform: scaleX(.91); transform-origin: left center; white-space: nowrap; }
.watermark { position: absolute; left: 417px; top: 650px; width: 300px; height: 90px; overflow: visible; }
.watermark span { display: block; font-size: 66px; line-height: 90px; font-weight: 700; color: #4a4a4a; white-space: nowrap; transform: scaleX(.84); transform-origin: left center; }
.bottom-strip { height: 30px; flex: none; background: #151515; display: flex; align-items: flex-end; }
.tab-comp { width: 159px; padding-left: 7px; }
.ic-log { width: 12px; height: 16px; color: #c4c4c4; }
.tab-comp .tab-t { margin-left: 8px; flex: 1; }
.tab-comp .tab-x { margin-right: 12px; }
.tab-flat { height: 25px; display: flex; align-items: center; gap: 6px; padding: 0 0 2px 8px; color: #bdbdbd; }
.bottom-body { height: 49px; flex: none; background: #1a1a1a; padding: 8px 7px 0 8px; }
.hscroll { width: 471px; height: 8px; background: #575757; border-radius: 4px; }
.bottom-btns { display: flex; justify-content: space-between; margin-top: 4px; padding: 0 0 0 4px; }
.btn-dark { height: 21px; background: #383838; border: 1px solid #222; border-radius: 3px; display: flex; align-items: center; justify-content: center; color: #dcdcdc; gap: 3px; }
.btn-show { width: 80px; }
.btn-clear { width: 75px; padding-bottom: 1px; }

/* right */
.right { width: 543px; margin-left: 4px; flex: none; display: flex; flex-direction: column; height: 843px; }
.tab-details { width: 160px; padding-left: 5px; border-top: 1px solid #0a5aa8; padding-bottom: 3px; }
.ic-tabpencil { width: 16px; height: 16px; color: #e0e0e0; }
.tab-details .tab-t { margin-left: 6px; flex: 1; }
.tab-details .tab-x { margin-right: 13px; }
.det-tools { height: 37px; flex: none; background: #242424; display: flex; align-items: center; padding-left: 8px; padding-bottom: 2px; }
.search-det { width: 478px; height: 22px; padding-left: 5px; gap: 5px; }
.search-det svg { color: #c8c8c8; }
.det-table { margin-left: 14px; color: #bdbdbd; }
.det-gear { margin-left: 9px; color: #b8b8b8; }
.det-body { height: 763px; flex: none; display: flex; overflow: hidden; }
.det-list { width: 527px; flex: none; }
.hdr { height: 27px; background: #2f2f2f; border-bottom: 1px solid #1a1a1a; display: flex; align-items: center; padding-left: 4px; font-size: 11.5px; font-weight: 700; color: #b0b0b0; }
.ic-tri2 { width: 11px; height: 7px; color: #7e7e7e; margin-right: 7px; }
.row { height: 27px; background: #242424; border-bottom: 1px solid #1a1a1a; display: flex; font-size: 11.2px; color: #a8a8a8; letter-spacing: .1px; }
.row-tag { height: 30px; }
.row-tag .lbl, .row-tag .val { padding-top: 2px; }
.lbl { width: 165px; flex: none; padding-left: 22px; display: flex; align-items: center; }
.val { flex: 1; border-left: 1px solid #1a1a1a; padding-left: 11px; display: flex; align-items: center; }
.rest { width: 23px; flex: none; border-left: 1px solid #1a1a1a; }
.combo { height: 22px; background: #0f0f0f; border: 1px solid #2e2e2e; border-radius: 4px; display: flex; align-items: center; justify-content: space-between; padding: 0 10px 0 7px; color: #bdbdbd; flex: none; }
.w124 { width: 124px; }
.w134 { width: 134px; padding-right: 9px; }
.w243 { width: 243px; padding-right: 9px; }
.w95 { width: 95px; }
.acts { display: flex; gap: 10px; margin-left: 8px; color: #c0c0c0; }
.cb { width: 17px; height: 18px; background: #0f0f0f; border: 1px solid #2e2e2e; border-radius: 3px; display: flex; align-items: center; justify-content: center; }
.check { color: #0a70e0; }
.tagbox { width: 236px; height: 26px; background: #0f0f0f; border: 1px solid #2e2e2e; border-radius: 4px; display: flex; align-items: center; padding-left: 5px; }
.chip { width: 225px; height: 18px; background: #595959; border-radius: 3px; display: flex; align-items: center; justify-content: space-between; padding: 0 4px 0 5px; color: #ececec; }
.chip svg { color: #c4c4c4; }
.tag-chev { margin-left: 2px; color: #c8c8c8; }
.empty { width: 60px; height: 24px; background: #0f0f0f; border: 1px solid #2a2a2a; border-radius: 4px; display: flex; align-items: center; padding-left: 9px; color: #6e6e6e; }
.det-gutter { flex: 1; background: #242424; padding: 3px 4px 0 4px; }
.det-thumb { width: 8px; height: 630px; background: #4f4f4f; border-radius: 4px; }
.det-foot { height: 18px; flex: none; background: #242424; border-top: 1px solid #1a1a1a; }

/* status bar */
.status { height: 32px; flex: none; margin: 3px 3px 0 0; background: #242424; display: flex; align-items: center; color: #bdbdbd; }
.st { height: 100%; display: flex; align-items: center; border-right: 2px solid #1a1a1a; flex: none; }
.st1 { width: 132px; padding-left: 10px; gap: 2px; }
.ic-st { width: 19px; height: 19px; margin-left: 0; color: #c0c0c0; }
.st2 { width: 104px; padding-left: 13px; gap: 5px; }
.st3 { width: 400px; padding-left: 14px; }
.ic-cmd { width: 17px; height: 16px; color: #c0c0c0; margin-right: 4px; }
.st3 .ic12 { margin-left: 5px; }
.console { margin-left: 12px; width: 299px; height: 21px; background: #0f0f0f; border: 1px solid #2c2c2c; border-radius: 4px; padding-left: 8px; display: flex; align-items: center; font-family: "Liberation Mono", monospace; font-size: 12px; color: #5c5c5c; }
.st-fill { flex: 1; }
.st4 { width: 100px; padding-left: 12px; gap: 2px; }
.ic-saved { width: 18px; height: 16px; color: #c0c0c0; }
.st5 { width: 161px; border-right: 0; padding-left: 15px; }
.ic-rc { width: 14px; height: 18px; color: #c0c0c0; margin-right: 5px; }
.st5 .ic12 { margin-left: 3px; }

/* popup */
.popup { position: absolute; left: 211px; top: 245px; width: 468px; height: 358px; background: #3a3a3a; border: 1px solid #555; padding: 9px 5px 0 9px; }
.pop-search { width: 448px; height: 20px; background: #0f0f0f; border-radius: 10px; display: flex; align-items: center; padding-left: 5px; gap: 7px; color: #686868; }
.pop-search span { margin-top: -2px; }
.pop-search svg { color: #c8c8c8; }
.pop-head { display: flex; align-items: center; height: 15px; margin-top: 6px; padding-left: 2px; font-size: 9.5px; letter-spacing: 1.1px; color: #707070; font-weight: 500; }
.pop-head i { display: block; margin-left: 12px; width: 326px; height: 1px; background: #6a6a6a; }
.pop-list { list-style: none; margin: 4px 0 0 0; padding: 0 0 0 16px; }
.pop-list li { height: 21px; display: flex; align-items: center; justify-content: space-between; color: #e6e6e6; }
.pop-list em { font-style: normal; color: #9c9c9c; font-size: 12.85px; }
```
